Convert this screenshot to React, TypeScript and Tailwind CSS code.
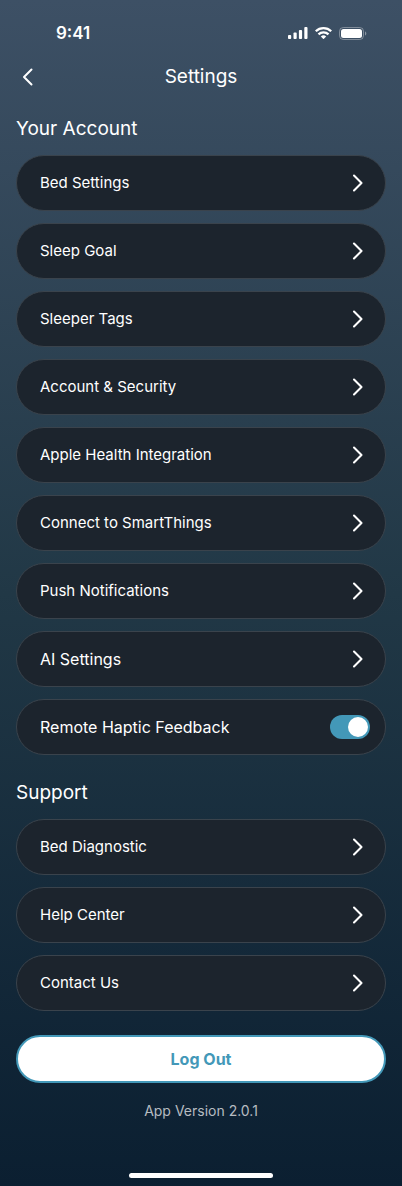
import React, { useState } from 'react';

const accountItems = [
  'Bed Settings',
  'Sleep Goal',
  'Sleeper Tags',
  'Account & Security',
  'Apple Health Integration',
  'Connect to SmartThings',
  'Push Notifications',
];

const supportItems = ['Bed Diagnostic', 'Help Center', 'Contact Us'];

const rowClass =
  'flex h-14 w-full items-center justify-between rounded-full border border-[#3a434c] bg-[#1c242d] pl-[23px] text-left text-white';

const headingClass = 'text-[19px] leading-7 text-white';

const StatusBar: React.FC = () => (
  <div className="flex h-[55px] items-end justify-between pb-3 pl-14 pr-[35px] text-white">
    <span className="text-[17px] leading-5 font-semibold">9:41</span>
    <div className="flex h-5 items-center gap-[7px]">
      {/* Signal */}
      <svg width="20" height="12" viewBox="0 0 20 12" fill="currentColor" aria-hidden="true">
        <rect x="0" y="8" width="3.2" height="4" rx="0.9" />
        <rect x="5.5" y="5.5" width="3.2" height="6.5" rx="0.9" />
        <rect x="10.9" y="3" width="3.2" height="9" rx="0.9" />
        <rect x="16.3" y="0" width="3.2" height="12" rx="0.9" />
      </svg>
      {/* Wi-Fi */}
      <svg width="17" height="12" viewBox="0 0 17 12" fill="none" stroke="currentColor" strokeWidth="2.3" aria-hidden="true">
        <path d="M0.8 4.3a11 11 0 0 1 15.4 0" />
        <path d="M3.5 7.4a7.2 7.2 0 0 1 10 0" />
        <path d="M8.5 12.2 5.8 9.5a3.9 3.9 0 0 1 5.4 0Z" fill="currentColor" stroke="none" />
      </svg>
      {/* Battery */}
      <svg width="28" height="13" viewBox="0 0 28 13" fill="none" aria-hidden="true">
        <rect x="0.5" y="0.5" width="24" height="12" rx="3.8" stroke="white" strokeOpacity="0.35" />
        <rect x="2" y="2" width="21" height="9" rx="2.5" fill="white" />
        <path d="M26 4.5v4c.8-.3 1.3-1.1 1.3-2s-.5-1.7-1.3-2Z" fill="white" fillOpacity="0.4" />
      </svg>
    </div>
  </div>
);

const SettingsRow: React.FC<{ label: string; textClass?: string }> = ({ label, textClass = 'text-[15px] leading-6' }) => (
  <li>
    <button type="button" className={`${rowClass} ${textClass} pr-[21px]`}>
      <span>{label}</span>
      <svg width="12" height="18" viewBox="0 0 12 18" fill="none" stroke="currentColor" strokeWidth="2.1" strokeLinecap="round" strokeLinejoin="round" aria-hidden="true">
        <path d="M2 1.5 9.5 9 2 16.5" />
      </svg>
    </button>
  </li>
);

const App: React.FC = () => {
  const [haptic, setHaptic] = useState(true);

  return (
    <div className="flex min-h-screen flex-col bg-linear-to-b from-[#3d5065] via-[#213846] to-[#0b1f31] font-['Inter',sans-serif]">
      <StatusBar />

      <header className="grid h-11 grid-cols-[1fr_auto_1fr] items-center px-4 text-white">
        <button type="button" aria-label="Back" className="flex size-6 items-center justify-center">
          <svg width="12" height="18" viewBox="0 0 12 18" fill="none" stroke="currentColor" strokeWidth="2" strokeLinecap="round" strokeLinejoin="round" aria-hidden="true">
            <path d="M9.5 1.5 2 9l7.5 7.5" />
          </svg>
        </button>
        <h1 className={headingClass}>Settings</h1>
      </header>

      <main className="flex flex-1 flex-col gap-6 px-4 pt-4">
        <section className="flex flex-col gap-3">
          <h2 className={headingClass}>Your Account</h2>
          <ul className="flex flex-col gap-3">
            {accountItems.map((item) => (
              <SettingsRow key={item} label={item} />
            ))}
            <SettingsRow label="AI Settings" textClass="text-base" />
            <li>
              <label className={`${rowClass} pr-[15px] text-base`}>
                <span>Remote Haptic Feedback</span>
                <input
                  type="checkbox"
                  role="switch"
                  checked={haptic}
                  onChange={(e) => setHaptic(e.target.checked)}
                  className="flex h-6 w-10 appearance-none items-center rounded-full bg-gray-600 px-0.5 before:size-5 before:rounded-full before:bg-white checked:justify-end checked:bg-[#4398b8]"
                />
              </label>
            </li>
          </ul>
        </section>

        <section className="flex flex-col gap-3">
          <h2 className={headingClass}>Support</h2>
          <ul className="flex flex-col gap-3">
            {supportItems.map((item) => (
              <SettingsRow key={item} label={item} />
            ))}
          </ul>
        </section>

        <div className="flex flex-col gap-4">
          <button type="button" className="h-12 w-full rounded-full border-2 border-[#4398b8] bg-white text-base font-bold text-[#4398b8]">
            Log Out
          </button>
          <p className="text-center text-sm leading-6 text-[#b6bcc1]">App Version 2.0.1</p>
        </div>
      </main>

      {/* Home indicator */}
      <div className="flex justify-center pb-2">
        <div className="h-[5px] w-36 rounded-full bg-white"></div>
      </div>
    </div>
  );
};

export default App;
